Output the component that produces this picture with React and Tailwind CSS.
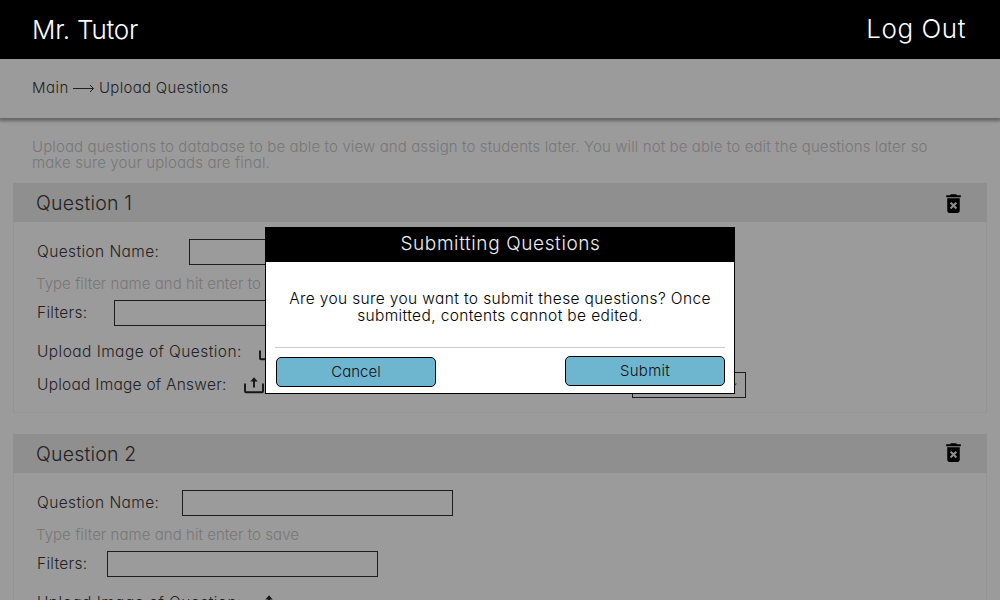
import React from "react";
import { MdDeleteForever } from "react-icons/md";

function UploadIcon() {
  return (
    <svg width="20" height="17" viewBox="0 0 20 17" fill="none" className="shrink-0">
      <path d="M1 6.5V14.2Q1 15.2 2 15.2H18Q19 15.2 19 14.2V6.5" stroke="#161616" strokeWidth="1.9" />
      <path d="M10 10.5V4" stroke="#161616" strokeWidth="1.9" />
      <path d="M6.3 4.6L10 0.2L13.7 4.6Z" fill="#161616" />
    </svg>
  );
}

function Header({ title, low }) {
  return (
    <div className="flex h-[39px] items-center justify-between bg-[#8f8f8f] pl-[23px] pr-[21px]">
      <h2 className="text-[19.5px] leading-[22px] tracking-[0.2px] text-[#222]">{title}</h2>
      <MdDeleteForever className={low ? "mt-0.5 text-black" : "mb-0.5 text-black"} size={25} />
    </div>
  );
}

function Question({ title, gap, select }) {
  return (
    <section className="h-[230px] shrink-0 border border-[#949494]">
      <div className="-mx-px -mt-px">
        <Header title={title} low={gap} />
      </div>
      <div className="pl-[22px] pt-[17px] text-[15.5px] text-[#222]">
        <div className="flex h-[26px] items-center">
          <span className="w-[146px] pl-px tracking-[0.4px]">Question Name:</span>
          <div className={gap ? "ml-[7px] h-[26px] w-[271px] border border-[#1c1c1c]" : "h-[26px] w-[271px] border border-[#1c1c1c]"} />
        </div>
        <p className="my-[7px] h-[21px] text-[15px] leading-6 tracking-[0.05px] text-[#777]">Type filter name and hit enter to save</p>
        <div className="flex h-[26px] items-center">
          <span className="w-[71px] pl-px tracking-[0.3px]">Filters:</span>
          <div className={gap ? "ml-[7px] h-[26px] w-[271px] border border-[#1c1c1c]" : "h-[26px] w-[271px] border border-[#1c1c1c]"} />
        </div>
        <div className="mt-[13px] flex h-[26px] items-center">
          <span className="w-[223px] pl-px tracking-[0.44px]">Upload Image of Question:</span>
          <UploadIcon />
        </div>
        <div className="mt-[7px] flex h-[26px] items-center">
          <span className="w-[208px] pl-px tracking-[0.25px]">Upload Image of Answer:</span>
          <UploadIcon />
          {select && (
            <div className="ml-[368px] flex h-[26px] w-[114px] items-center justify-end border border-[#1c1c1c] pr-2">
              <svg width="8" height="5" viewBox="0 0 8 5"><path d="M0 0.5H8L4 4.5Z" fill="#333" /></svg>
            </div>
          )}
        </div>
      </div>
    </section>
  );
}

function Modal() {
  return (
    <div role="dialog" className="absolute left-[265px] top-[227px] flex h-[167px] w-[470px] flex-col border border-black bg-white text-center">
      <h3 className="h-[34px] bg-black pl-px text-[19px] leading-[32px] tracking-[0.62px] text-[#eee]">Submitting Questions</h3>
      <p className="mt-7 text-[15.5px] leading-[17px] tracking-[0.37px] text-black">
        Are you sure you want to submit these questions? Once
        <br />
        submitted, contents cannot be edited.
      </p>
      <div className="mx-[9px] mt-[23px] flex justify-between border-t border-[#ccc] pt-2">
        <button className="ml-px mt-px h-[30px] w-40 rounded-[5px] border border-black bg-[#6eb5cf] text-[15px] leading-7 text-[#111]">Cancel</button>
        <button className="h-[30px] w-40 rounded-[5px] border border-black bg-[#6eb5cf] text-[15px] leading-7 tracking-[0.3px] text-[#111]">Submit</button>
      </div>
    </div>
  );
}

export default function App() {
  return (
    <div className="relative flex h-[600px] w-[1000px] flex-col overflow-hidden bg-[#9b9b9b] font-['Inter',sans-serif] font-light [font-feature-settings:'cv11']">
      <header className="flex h-[59px] shrink-0 items-center justify-between bg-black pl-8 pr-[34px] text-[26px] text-white">
        <span className="tracking-[-0.2px]">Mr. Tutor</span>
        <span className="-mt-0.5 tracking-[0.55px]">Log Out</span>
      </header>
      <nav className="flex h-[59px] shrink-0 items-center pl-8 text-[15px] text-[#222] shadow-[0_2px_3px_1px_rgba(0,0,0,0.35)]">
        <span className="w-9 whitespace-nowrap tracking-[0.45px]">Main</span>
        <svg width="22" height="9" viewBox="0 0 22 9" fill="none" stroke="#222" className="ml-[5px] mr-1">
          <path d="M0 4.5H20.5M17 1L20.5 4.5L17 8" />
        </svg>
        <span className="tracking-[0.3px]">Upload Questions</span>
      </nav>
      <main className="flex flex-col px-[13px] pt-[21px]">
        <p className="mb-3 pl-[19px] text-[15px] leading-4 tracking-[0.11px] text-[#777]">
          <span className="whitespace-nowrap">Upload questions to database to be able to view and assign to students later. You will not be able to edit the questions later so</span>
          <br />
          make sure your uploads are final.
        </p>
        <div className="flex flex-col gap-[21px]">
          <Question title="Question 1" gap select />
          <Question title="Question 2" />
        </div>
      </main>
      <Modal />
    </div>
  );
}
